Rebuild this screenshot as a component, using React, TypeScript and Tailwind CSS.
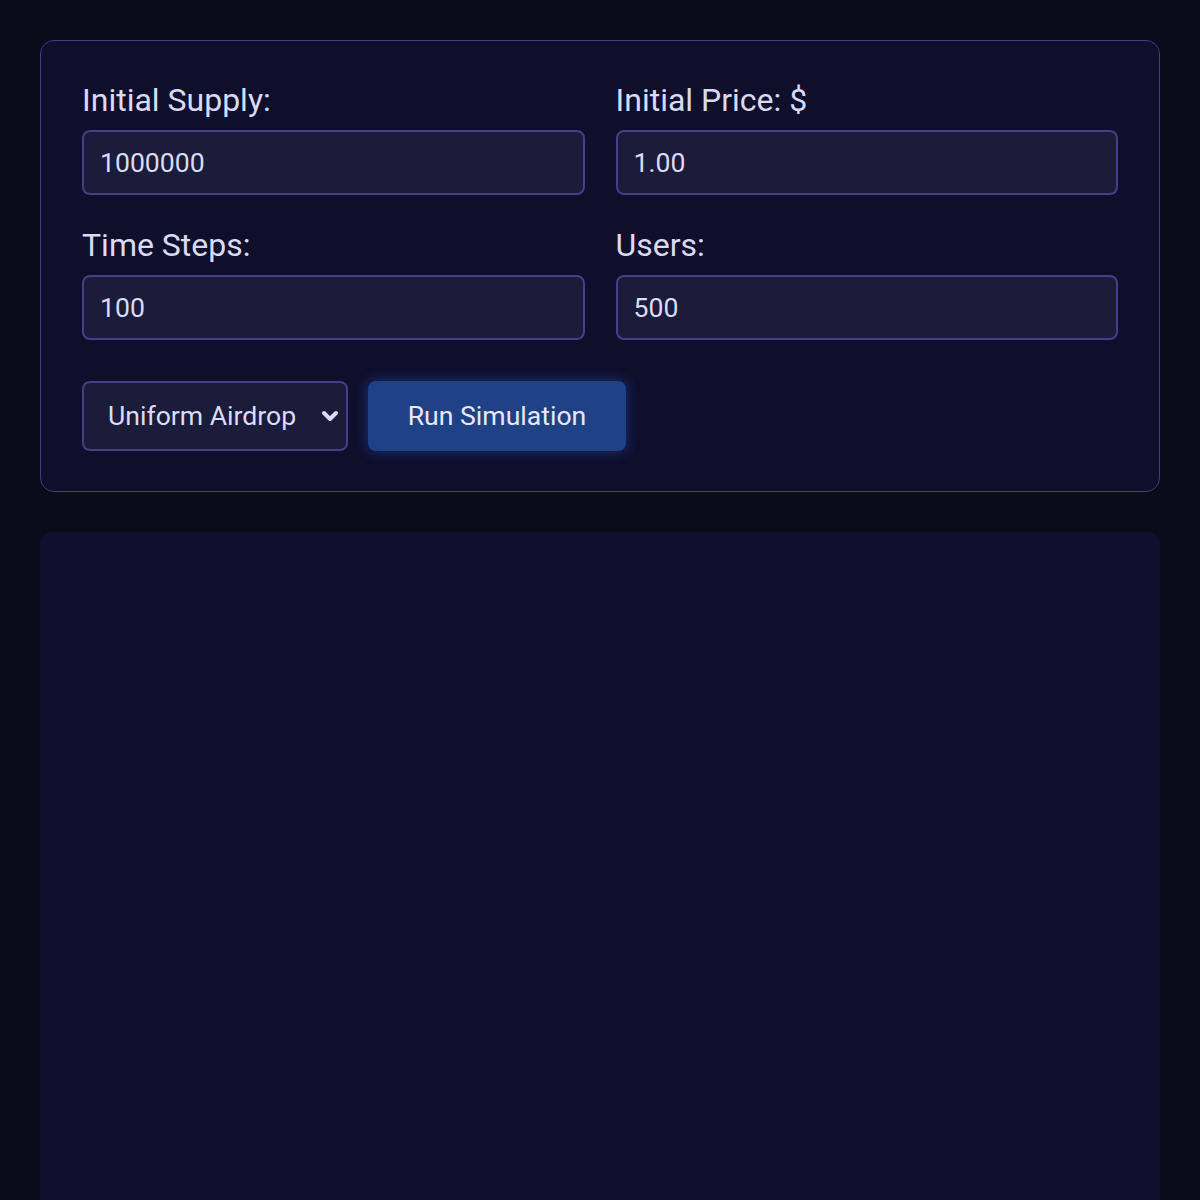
import { ChevronDown } from "lucide-react";

const fields = [
  { label: "Initial Supply:", value: "1000000" },
  { label: "Initial Price: $", value: "1.00" },
  { label: "Time Steps:", value: "100" },
  { label: "Users:", value: "500" },
];

export default function App() {
  return (
    <div className="min-h-[1200px] bg-[#0b0b1a] px-10 pt-10 font-['Roboto',sans-serif] text-[#dcdcf5]">
      <section className="rounded-[14px] border border-[#413d82] bg-[#0f0f2b] px-[41px] pt-10 pb-10">
        <div className="grid grid-cols-2 gap-x-[31px] gap-y-[31px]">
          {fields.map((f) => (
            <div key={f.label} className="flex flex-col">
              <label className="mb-[10px] text-[32px] leading-[39px] text-[#dadaf4]">{f.label}</label>
              <input
                defaultValue={f.value}
                className="h-[65px] rounded-lg border-2 border-[#443f88] bg-[#1b1b3a] px-[16px] text-[26.6px] text-[#dcdcf5] outline-none"
              />
            </div>
          ))}
        </div>
        <div className="mt-[41px] flex items-center gap-5">
          <div className="relative flex h-[70px] w-[266px] items-center rounded-lg border-2 border-[#443f88] bg-[#1b1b3a] pl-6 text-[26.6px]">
            Uniform Airdrop
            <ChevronDown className="absolute right-[4px] h-6 w-6" strokeWidth={4} />
          </div>
          <button className="h-[70px] w-[258px] rounded-lg bg-[#1f4185] text-[26.6px] text-[#e6e8ff] shadow-[0_0_14px_rgba(50,90,220,0.45)]">
            Run Simulation
          </button>
        </div>
      </section>
      <section className="mt-10 h-[700px] rounded-[14px] bg-[#0f1030]" />
    </div>
  );
}
